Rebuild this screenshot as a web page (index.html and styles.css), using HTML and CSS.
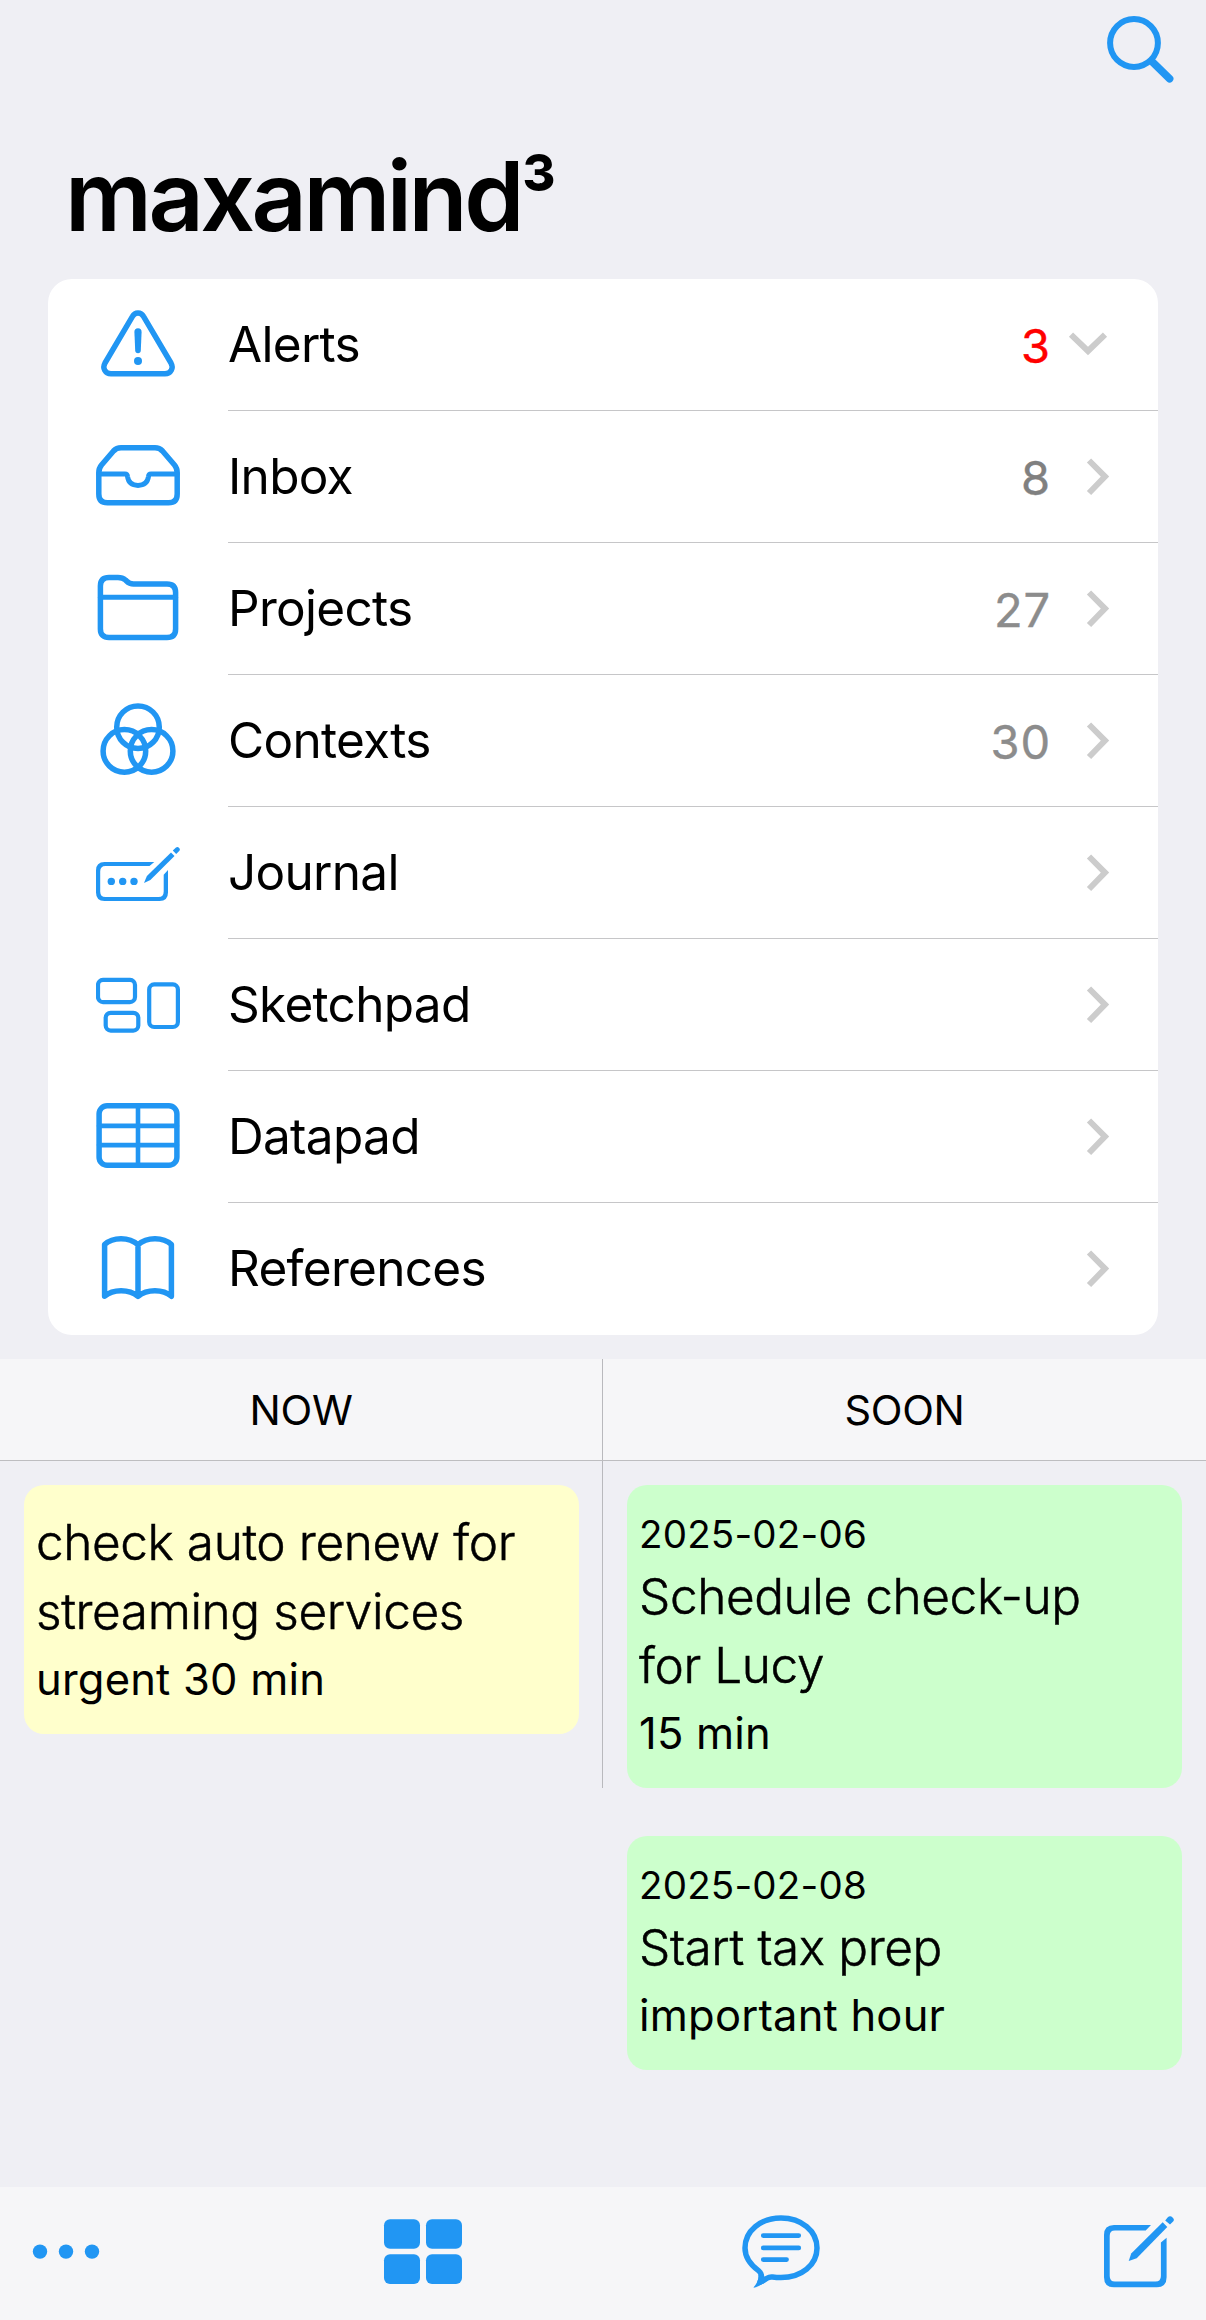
FILE: index.html
```html
<!DOCTYPE html>
<html lang="en">
<head>
<meta charset="utf-8">
<title>maxamind³</title>
<link rel="stylesheet" href="styles.css">
</head>
<body>
<div class="app">
  <header class="header">
    <svg class="search" viewBox="0 0 76 76" aria-label="Search">
      <circle cx="30" cy="31" r="23.9" stroke-width="6"/>
      <path d="M49 50.5 L65.6 66.8" stroke-width="7.6"/>
    </svg>
    <h1 class="title">maxamind<span class="cube">³</span></h1>
  </header>

  <nav class="menu">
    <a class="row">
      <svg class="icon" viewBox="0 0 84 84">
        <path d="M36.5 13.4 C39 8.9 45 8.9 47.5 13.4 L75 60 C77.8 65 75 70.8 69 70.8 H15 C9 70.8 6.2 65 9 60 Z"/>
        <path class="fill" d="M38.4 29 Q38.4 25.3 42 25.3 T45.6 29 L44.8 47.5 Q44.6 50.2 42 50.2 T39.2 47.5 Z"/>
        <circle class="fill" cx="42" cy="58" r="4"/>
      </svg>
      <span class="body"><span class="label">Alerts</span><span class="count alert">3</span>
        <svg class="chevron down" viewBox="0 0 40 40"><path d="M3 9.7 L20 26 L37 9.7"/></svg></span>
    </a>
    <a class="row">
      <svg class="icon" viewBox="0 0 84 84">
        <path d="M25 12.8 H59 Q63.5 12.8 66.5 16 L78.5 30 Q81.2 33.3 81.2 37.5 V59 Q81.2 67.8 72.5 67.8 H11.5 Q2.8 67.8 2.8 59 V37.5 Q2.8 33.3 5.5 30 L17.5 16 Q20.5 12.8 25 12.8 Z"/>
        <path d="M3 39 H29 Q31.3 39 31.5 41.5 C32.3 47 36 50.4 42 50.4 S51.7 47 52.5 41.5 Q52.7 39 55 39 H81" stroke-width="5"/>
      </svg>
      <span class="body"><span class="label">Inbox</span><span class="count">8</span>
        <svg class="chevron" viewBox="0 0 40 40"><path d="M19 3.5 L35 19.6 L19 36"/></svg></span>
    </a>
    <a class="row">
      <svg class="icon" viewBox="0 0 84 84">
        <path d="M13 10.5 H22 Q26.5 10.5 29.5 13 L30.5 14 Q33.5 17 37.5 17 H71 Q79.6 17 79.6 25.5 V62 Q79.6 70.5 71 70.5 H13 Q4.4 70.5 4.4 62 V19 Q4.4 10.5 13 10.5 Z"/>
        <path d="M4.4 30.2 H79.6" stroke-width="5"/>
      </svg>
      <span class="body"><span class="label">Projects</span><span class="count light">27</span>
        <svg class="chevron" viewBox="0 0 40 40"><path d="M19 3.5 L35 19.6 L19 36"/></svg></span>
    </a>
    <a class="row">
      <svg class="icon" viewBox="0 0 84 84">
        <circle cx="42" cy="28.2" r="21.3"/>
        <circle cx="28.4" cy="51.9" r="21.3"/>
        <circle cx="55.6" cy="51.9" r="21.3"/>
      </svg>
      <span class="body"><span class="label">Contexts</span><span class="count light">30</span>
        <svg class="chevron" viewBox="0 0 40 40"><path d="M19 3.5 L35 19.6 L19 36"/></svg></span>
    </a>
    <a class="row">
      <svg class="icon" viewBox="0 0 84 84">
        <path class="fill" d="M58.3 31 H8.5 Q0 31 0 39.5 V61.5 Q0 70 8.5 70 H63.5 Q72 70 72 61.5 V39 L67.7 43.7 V60.5 Q67.7 66 62.5 66 H9.5 Q4.2 66 4.2 60.5 V40.5 Q4.2 35 9.5 35 H53.5 Z"/>
        <circle class="fill" cx="15.3" cy="50.4" r="3.7"/>
        <circle class="fill" cx="26.7" cy="50.4" r="3.7"/>
        <circle class="fill" cx="38" cy="50.4" r="3.7"/>
        <path class="fill" d="M48 52.1 L50.9 45 L75 21.4 L78.5 24.9 L54.4 49 Z"/>
        <path class="fill" d="M76.8 19.6 L80 16.6 Q81.6 15.4 83.1 16.9 T83.2 20 L80.2 23 Z"/>
      </svg>
      <span class="body"><span class="label">Journal</span>
        <svg class="chevron" viewBox="0 0 40 40"><path d="M19 3.5 L35 19.6 L19 36"/></svg></span>
    </a>
    <a class="row">
      <svg class="icon thin" viewBox="0 0 84 84">
        <rect x="2" y="16.9" width="37" height="22.2" rx="5"/>
        <rect x="9.7" y="49.8" width="32.6" height="17.8" rx="5"/>
        <rect x="53.2" y="21.4" width="28.7" height="42.6" rx="5"/>
      </svg>
      <span class="body"><span class="label">Sketchpad</span>
        <svg class="chevron" viewBox="0 0 40 40"><path d="M19 3.5 L35 19.6 L19 36"/></svg></span>
    </a>
    <a class="row">
      <svg class="icon" viewBox="0 0 84 84">
        <rect x="3.1" y="10.8" width="77.8" height="59.4" rx="8"/>
        <path d="M3 30.9 H81 M3 50.1 H81 M42 11 V70" stroke-width="4.6"/>
      </svg>
      <span class="body"><span class="label">Datapad</span>
        <svg class="chevron" viewBox="0 0 40 40"><path d="M19 3.5 L35 19.6 L19 36"/></svg></span>
    </a>
    <a class="row">
      <svg class="icon" viewBox="0 0 84 84">
        <path d="M42 17.8 C33 9.8 17 9.8 8.6 17.6 V69.3 C17 61.8 33 61.8 42 69.3 C51 61.8 67 61.8 75.4 69.3 V17.6 C67 9.8 51 9.8 42 17.8 V69"/>
      </svg>
      <span class="body"><span class="label">References</span>
        <svg class="chevron" viewBox="0 0 40 40"><path d="M19 3.5 L35 19.6 L19 36"/></svg></span>
    </a>
  </nav>

  <section class="board">
    <div class="heads">
      <h2 class="head">NOW</h2>
      <h2 class="head">SOON</h2>
    </div>
    <div class="lane">
      <div class="cell">
        <article class="card now">
          <p class="task">check auto renew for streaming services</p>
          <p class="meta">urgent 30 min</p>
        </article>
      </div>
      <div class="cell">
        <article class="card soon">
          <p class="date">2025-02-06</p>
          <p class="task">Schedule check-up for Lucy</p>
          <p class="meta">15 min</p>
        </article>
      </div>
    </div>
    <div class="lane last">
      <div class="cell"></div>
      <div class="cell">
        <article class="card soon">
          <p class="date">2025-02-08</p>
          <p class="task">Start tax prep</p>
          <p class="meta">important hour</p>
        </article>
      </div>
    </div>
  </section>

  <footer class="toolbar">
    <svg width="68" height="96" viewBox="0 0 68 96">
      <circle class="fill" cx="8" cy="46.6" r="7.2"/>
      <circle class="fill" cx="34" cy="46.6" r="7.2"/>
      <circle class="fill" cx="60" cy="46.6" r="7.2"/>
    </svg>
    <svg width="82" height="96" viewBox="0 0 82 96">
      <g class="fill">
        <rect x="4" y="14.3" width="36" height="29.4" rx="6"/>
        <rect x="46" y="14.3" width="36" height="29.4" rx="6"/>
        <rect x="4" y="49.3" width="36" height="29.6" rx="6"/>
        <rect x="46" y="49.3" width="36" height="29.6" rx="6"/>
      </g>
    </svg>
    <svg width="78" height="96" viewBox="0 0 78 96">
      <path d="M39 13 C59.5 13 75 26 75 43 S59.5 72.6 39 72.6 Q34.5 72.6 30.5 72 Q27.5 71.6 25 73.2 Q20.5 76.2 18 77.3 Q19.8 73.5 19.3 70 Q19 67.6 16.5 65.6 C7.5 59 3 51.5 3 43 C3 26 18.5 13 39 13 Z"/>
      <path class="fill" d="M11.2 82.8 Q17.5 76 16.3 69.5 L28 73.5 Q18 82 11.2 82.8 Z"/>
      <path d="M21.2 30.6 H56.8 M21.2 42.9 H56.8 M21.2 54.6 H44.6" stroke-width="4.6"/>
    </svg>
    <svg width="74" height="96" viewBox="0 0 74 96">
      <path class="fill" d="M51 20 H14 Q4 20 4 30 V72.3 Q4 82.3 14 82.3 H56.6 Q66.6 82.3 66.6 72.3 V32.7 L60.9 37.5 V71 Q60.9 76.5 55.5 76.5 H15 Q9.7 76.5 9.7 71 V31 Q9.7 25.6 15 25.6 H45.7 Z"/>
      <path class="fill" d="M28.7 56 L31.2 48.5 L62.7 17.3 L67.3 22 L36.7 53.2 Z"/>
      <path class="fill" d="M65.2 15.4 L67.6 12.6 Q70 10 72.6 12.4 T72.6 17 L70 19.6 Z"/>
    </svg>
  </footer>
</div>
</body>
</html>
```
FILE: styles.css
```css
* {
  box-sizing: border-box;
}

body {
  margin: 0;
  background: #efeff4;
  color: #000;
  font-family: Inter, "Liberation Sans", sans-serif;
}

h1,
h2,
p {
  margin: 0;
}

svg {
  display: block;
  flex: none;
  fill: none;
  stroke: #2196f3;
  stroke-width: 5.5;
  stroke-linecap: round;
  stroke-linejoin: round;
}

.fill {
  fill: #2196f3;
  stroke: none;
}

.app {
  display: flex;
  flex-direction: column;
  width: 1206px;
  height: 2320px;
}

.header {
  display: flex;
  flex-direction: column;
  height: 279px;
  padding: 12px 26px 0 65px;
}

.search {
  align-self: flex-end;
  width: 76px;
  height: 76px;
}

.title {
  margin-top: 60px;
  font-size: 96.5px;
  font-weight: 600;
  line-height: 96px;
  letter-spacing: -3.5px;
}

.cube {
  display: inline-block;
  font-size: 90px;
  line-height: 0;
  vertical-align: 1px;
  transform: scaleX(0.86);
  transform-origin: left;
}

.menu {
  margin: 0 48px;
  overflow: hidden;
  background: #fff;
  border-radius: 24px;
}

.row {
  display: flex;
  align-items: center;
  height: 132px;
  padding-left: 48px;
}

.icon {
  width: 84px;
  height: 84px;
}

.thin {
  stroke-width: 4.2;
}

.body {
  display: flex;
  flex: 1;
  align-items: center;
  height: 132px;
  margin-left: 48px;
  padding-right: 48px;
  border-bottom: 1px solid #c6c6c8;
}

.row:last-child .body {
  border-bottom-color: transparent;
}

.label {
  flex: 1;
  padding-bottom: 1px;
  font-size: 49.5px;
  letter-spacing: -0.7px;
}

.count {
  padding-top: 1px;
  font-size: 47px;
  letter-spacing: 0.9px;
  color: #808080;
  -webkit-text-stroke: 0.4px;
}

.count.light {
  color: #8c8c8c;
}

.count.alert {
  color: #f00;
}

.chevron {
  width: 40px;
  height: 40px;
  margin-left: 19px;
  stroke: #ccc;
  stroke-width: 6;
  stroke-linecap: butt;
  stroke-linejoin: miter;
}

.chevron.down {
  margin-right: 2px;
  margin-left: 17px;
}

.board {
  flex: 1;
  margin-top: 24px;
}

.heads,
.lane {
  display: grid;
  grid-template-columns: 603px 603px;
}

.heads {
  background: #f6f6f8;
  border-bottom: 1px solid #bdbdc0;
}

.head {
  height: 101px;
  font-size: 41.5px;
  font-weight: 400;
  line-height: 103px;
  letter-spacing: -0.3px;
  text-align: center;
}

.lane {
  margin-bottom: 24px;
}

.cell {
  padding: 24px 24px 0;
}

.head:first-child,
.cell:first-child {
  border-right: 1px solid #b9b9bd;
}

.cell:first-child {
  padding-right: 23px;
}

.last .cell:first-child {
  border-right-color: transparent;
}

.card {
  padding: 22.5px 12px 21.5px;
  border-radius: 20px;
}

.now {
  background: #ffffcc;
}

.soon {
  background: #ccffcc;
}

.date {
  padding-bottom: 2px;
  font-size: 38.5px;
  line-height: 52px;
  letter-spacing: 0.2px;
}

.task {
  max-width: 500px;
  font-size: 49.5px;
  font-weight: 300;
  line-height: 69px;
  letter-spacing: -0.4px;
  -webkit-text-stroke: 0.5px;
}

.meta {
  font-size: 43.5px;
  line-height: 67px;
  letter-spacing: 0.2px;
}

.toolbar {
  display: flex;
  justify-content: space-between;
  height: 133px;
  padding: 18px 32px 0;
  background: #f6f6f8;
}
```
